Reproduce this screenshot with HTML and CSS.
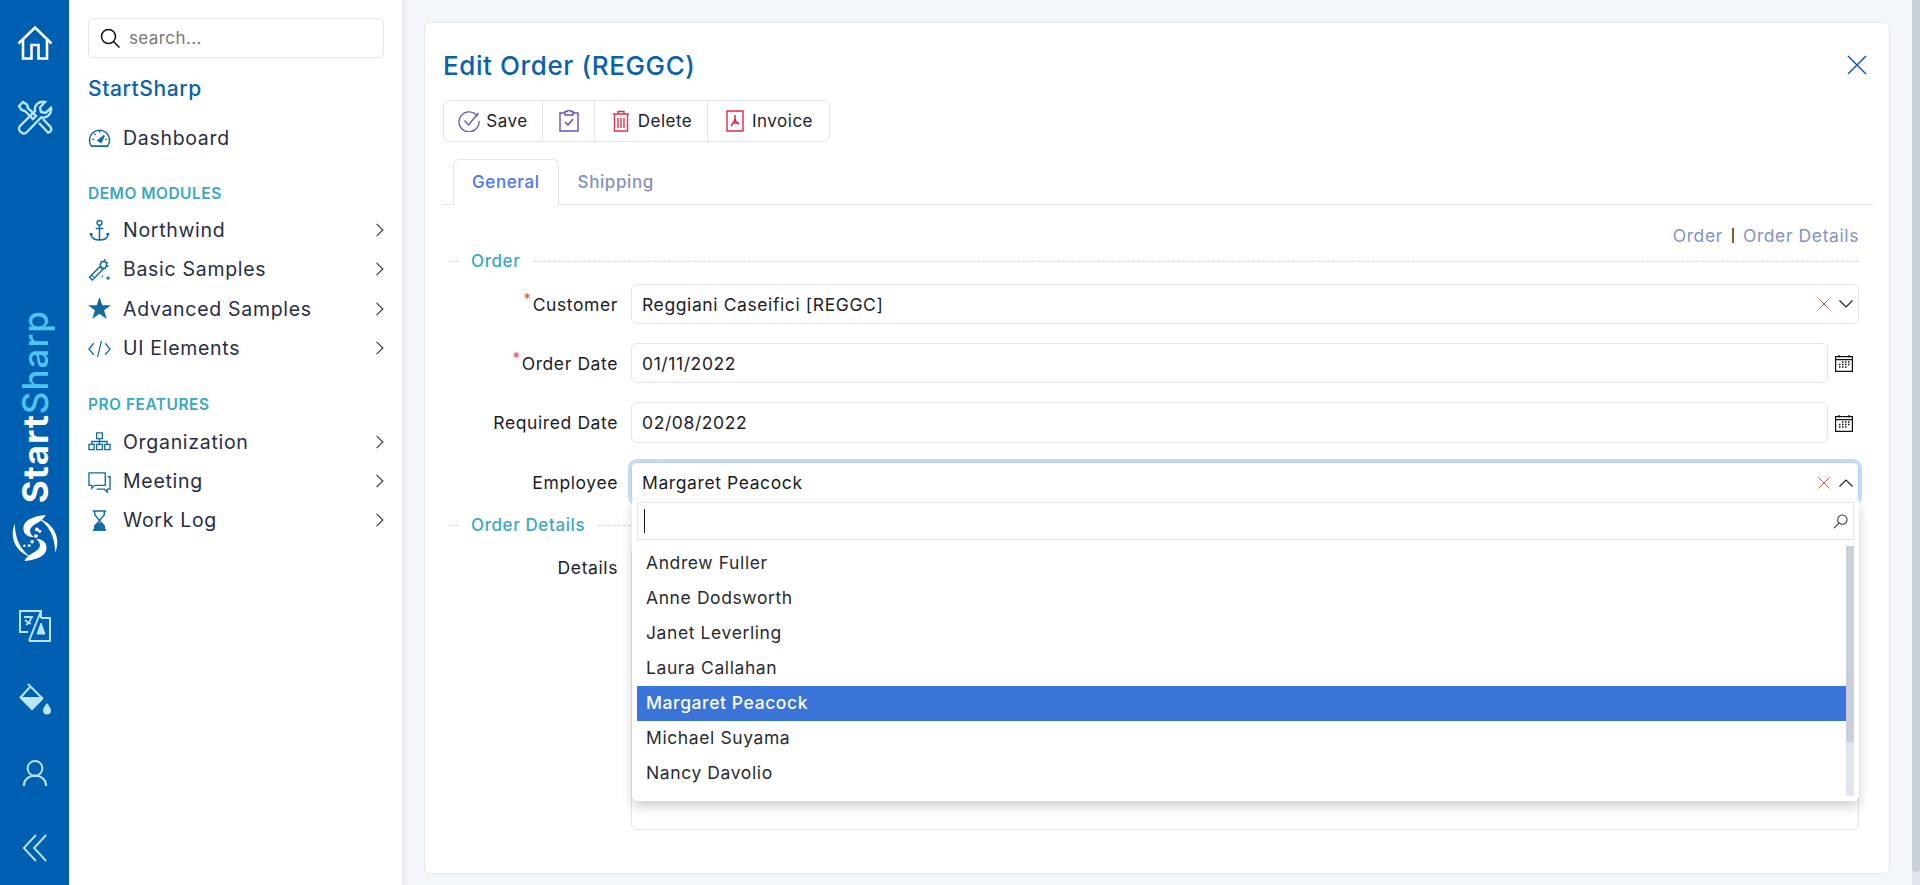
FILE: index.html
```html
<!DOCTYPE html>
<html lang="en">
<head>
  <meta charset="UTF-8">
  <title>Edit Order (REGGC)</title>
  <link rel="stylesheet" href="styles.css">
</head>
<body>
  <aside class="rail">
    <svg class="rail-icon rail-home" viewBox="0 0 36 36" fill="none" stroke="currentColor" stroke-width="2.6"><path d="M1.500 18.500 18 2.500l16.500 16"/><path d="M6 15v18.500h8.500V20h7v13.500H30V15"/></svg>
    <svg class="rail-icon rail-tools" viewBox="0 0 36 36" fill="none" stroke="currentColor" stroke-width="2.400"><path d="M2 6l4-4 4 2.500 1 3.500 8 8-3 3-8-8-3.500-1z"/><path d="M34 8l-5.500 5-4.500-1-1-4.500 5-5.500c-6-1.500-11 3-10 9L3 26c-3.500 3.500 3 10 6.500 6.500L24 17.500c6 1 11-3.500 10-9.500z"/><path d="M22 23l9 9.500c3.500-.5 4-3.500 2.500-5.500L26 19"/></svg>
    <div class="rail-brand">
      <span class="rail-brand-text"><b>Start</b><i>Sharp</i></span>
      <svg class="rail-logo" viewBox="0 0 48 48" fill="#fff">
        <path d="M35 0C24 1 11 5 12 15c.5 6 7 8.500 11 8-4-3-6-7-2-11 4-4 11-5 14-12z"/>
        <path d="M35 0C24 1 11 5 12 15c.5 6 7 8.500 11 8-4-3-6-7-2-11 4-4 11-5 14-12z" transform="rotate(180 24 24)"/>
        <path d="M3 9C-3 22 3 39 20 44 11 38 3 27 3 9z"/>
        <path d="M3 9C-3 22 3 39 20 44 11 38 3 27 3 9z" transform="rotate(180 24 24)"/>
        <g fill="#005fb0"><circle cx="26" cy="13" r="1.500"/><circle cx="22" cy="35" r="1.500"/></g>
        <circle cx="26" cy="15" r="2"/><circle cx="29" cy="17" r="1.600"/><circle cx="25" cy="22" r="2"/><circle cx="21" cy="28" r="1.800"/><circle cx="18" cy="32" r="1.500"/><circle cx="13" cy="32" r="1.300"/>
      </svg>
    </div>
    <svg class="rail-icon rail-translate" viewBox="0 0 32 32" fill="none" stroke="currentColor" stroke-width="2"><path d="M22 8V1H1v21h8"/><path d="M10 31h21V8h-9"/><path d="M22 1 10 31"/><path d="M5 7h9M12 7c0 4-2 6-5 8M6 10c2 2 3 3 6 4" stroke-width="1.800"/><path d="M22 13l-4 11h8z" fill="currentColor" stroke-width="1"/></svg>
    <svg class="rail-icon rail-bucket" viewBox="0 0 32 32" fill="none" stroke="currentColor" stroke-width="2"><path d="M9 1l15 15"/><path d="M11 4 1.500 14.500 13 26l10-10"/><path d="M3 15h19l-9 10.500z" fill="currentColor"/><path d="M28 20c-2 3-4 5-4 7.500a4 4 0 0 0 8 0c0-2.500-2-4.500-4-7.500z" fill="currentColor" stroke="none"/></svg>
    <svg class="rail-icon rail-user" viewBox="0 0 28 30" fill="none" stroke="currentColor" stroke-width="2.200"><circle cx="14" cy="10" r="8"/><path d="M2 29c0-7 5-11 12-11s12 4 12 11"/></svg>
    <svg class="rail-icon rail-collapse" viewBox="0 0 28 30" fill="none" stroke="currentColor" stroke-width="2"><path d="M15 1 2 15l13 14M26 1 13 15l13 14"/></svg>
  </aside>

  <nav class="sidebar">
    <div class="side-search">
      <svg class="side-search-icon" viewBox="0 0 20 20" fill="none" stroke="#111" stroke-width="1.500"><circle cx="8.500" cy="8.500" r="7"/><path d="m13.500 13.500 6 6"/></svg>
      <span>search...</span>
    </div>
    <div class="side-brand">StartSharp</div>
    <a class="side-item">
      <svg class="side-icon" viewBox="0 0 24 24" fill="none" stroke="currentColor" stroke-width="1.600"><path d="M3.500 21a10.500 10.500 0 1 1 17 0z"/><path d="m10.500 15 6.500-5-3.500 7z" fill="currentColor"/><path d="M4.500 14h2M6.500 8 8 9.500M12 5v2M20 14h-2" stroke-width="1.300"/></svg>
      <span>Dashboard</span>
    </a>
    <div class="side-head side-head-first">DEMO MODULES</div>
    <a class="side-item">
      <svg class="side-icon" viewBox="0 0 24 24" fill="none" stroke="currentColor" stroke-width="1.600"><circle cx="12" cy="4" r="2.500"/><path d="M12 6.500V22M8 10h8M2 15l1.500 2.500c1 3 5 4.500 8.500 4.500s7.500-1.500 8.500-4.500L22 15M2 15l3 1M22 15l-3 1"/></svg>
      <span>Northwind</span><i class="chevron"></i>
    </a>
    <a class="side-item">
      <svg class="side-icon" viewBox="0 0 24 24" fill="none" stroke="currentColor" stroke-width="1.500"><path d="m1.500 20 11-11 3 3-11 11z"/><path d="m12.500 6.500 1-1 .500-2 2 .500 1.500-2 .500 2.500 2 .500-1 2 1.500 1.500-2 .500-.500 2-2-.500-1 1z"/><path d="m4 18 2 2" stroke-width="1.200"/><path d="M21 19v4M19 21h4M15 18.500v1.500" stroke-width="1.300"/></svg>
      <span>Basic Samples</span><i class="chevron"></i>
    </a>
    <a class="side-item">
      <svg class="side-icon" viewBox="0 0 24 24" fill="#136ba0"><path d="m12 0 3 8.500h9l-7.200 5.400 2.700 9.100-7.500-5.400L4.500 23l2.700-9.100L0 8.500h9z"/></svg>
      <span>Advanced Samples</span><i class="chevron"></i>
    </a>
    <a class="side-item">
      <svg class="side-icon" viewBox="0 0 24 24" fill="none" stroke="currentColor" stroke-width="1.300"><path d="M6 6.500 1 12.500l5 6M18 6.500l5 6-5 6M14 4l-4 17"/></svg>
      <span>UI Elements</span><i class="chevron"></i>
    </a>
    <div class="side-head">PRO FEATURES</div>
    <a class="side-item">
      <svg class="side-icon" viewBox="0 0 24 24" fill="none" stroke="currentColor" stroke-width="1.400"><path d="M9 3h6v6H9zM1 15h5.500v5.500H1zM9 15h6v5.500H9zM17.500 15H23v5.500h-5.500zM12 9v6M4 15v-3h16v3"/></svg>
      <span>Organization</span><i class="chevron"></i>
    </a>
    <a class="side-item">
      <svg class="side-icon" viewBox="0 0 24 24" fill="none" stroke="currentColor" stroke-width="1.400"><path d="M1 3h17v13H7l-3 3v-3H1z"/><path d="M20.500 7H23v13h-3v3l-3-3H9"/></svg>
      <span>Meeting</span><i class="chevron"></i>
    </a>
    <a class="side-item">
      <svg class="side-icon" viewBox="0 0 24 24" fill="none" stroke="currentColor" stroke-width="1.500"><path d="M5 2h14M5 22h14M7 2v4l5 6 5-6V2M7 22v-4l5-6 5 6v4"/><path d="M7 22v-2a5 5 0 0 1 10 0v2z" fill="currentColor"/></svg>
      <span>Work Log</span><i class="chevron"></i>
    </a>
  </nav>

  <main class="main">
    <section class="card">
      <div class="card-title">
        <h1>Edit Order (REGGC)</h1>
        <svg class="card-close" viewBox="0 0 20 20" fill="none" stroke="#1c4fd0" stroke-width="1.500"><path d="m1 1 18 18M19 1 1 19"/></svg>
      </div>

      <div class="toolbar">
        <button class="tool tool-save">
          <svg viewBox="0 0 22 22" fill="none" stroke-width="1.300"><path d="M19.500 6.500A10 10 0 1 0 21 11" stroke="#6a4fc0"/><path d="m6.500 10.500 4 4.500 10-12" stroke="#6a4fc0"/></svg>
          <span>Save</span>
        </button>
        <button class="tool tool-apply">
          <svg viewBox="0 0 20 22" fill="none" stroke="#6a4fc0" stroke-width="1.400"><path d="M6 3H1v18h18V3h-5"/><path d="M6 1.500h2.500a1.500 1.500 0 0 1 3 0H14V5H6z"/><path d="m6 12 3 3 5-6" stroke="#5a48b0"/></svg>
        </button>
        <button class="tool tool-delete">
          <svg viewBox="0 0 18 22" fill="none" stroke="#e0344c" stroke-width="1.400"><path d="M1 4h16M6 4V1.500h6V4M2.500 4v17h13V4M6 8v10M9 8v10M12 8v10"/></svg>
          <span>Delete</span>
        </button>
        <button class="tool tool-invoice">
          <svg viewBox="0 0 18 22" fill="none" stroke="#d92c4c" stroke-width="1.400"><path d="M1 1h16v20H1z"/><path d="M9 5v3c0 3-2 5-4 8M9 8c0 3 2 5 4 6M6 13h7" stroke-width="1.500"/></svg>
          <span>Invoice</span>
        </button>
      </div>

      <div class="tabs">
        <span class="tab tab-active">General</span>
        <span class="tab">Shipping</span>
      </div>

      <div class="cat-links"><a>Order</a><i></i><a>Order Details</a></div>

      <div class="category cat-order"><span>Order</span></div>

      <div class="row">
        <label class="row-label"><sup>*</sup>Customer</label>
        <div class="select">
          <span>Reggiani Caseifici [REGGC]</span>
          <svg class="select-clear" viewBox="0 0 12 12" fill="none" stroke="#cc5a4c" stroke-width="1"><path d="m.5.500 11 11M11.500.500l-11 11"/></svg>
          <svg class="select-arrow" viewBox="0 0 14 8" fill="none" stroke="#222" stroke-width="1.200"><path d="m.5.500 6.500 6.500 6.500-6.500"/></svg>
        </div>
      </div>

      <div class="row">
        <label class="row-label"><sup>*</sup>Order Date</label>
        <div class="date-input">01/11/2022</div>
        <svg class="date-icon" viewBox="0 0 18 18"><use href="#calendar"/></svg>
      </div>

      <div class="row row-tall">
        <label class="row-label">Required Date</label>
        <div class="date-input">02/08/2022</div>
        <svg class="date-icon" viewBox="0 0 18 18">
          <g id="calendar" fill="none" stroke="#111" stroke-width="1.200">
            <path d="M.6 2.600h16.800v14.800H.6zM.6 5.600h16.800M4 1v2.500M14 1v2.500"/>
            <path d="M7 8h1.500M10 8h1.500M13 8h1.500M4 10.500h1.500M7 10.500h1.500M10 10.500h1.500M13 10.500h1.500M4 13h1.500M7 13h1.500M10 13h1.500" stroke-width="1.300"/>
          </g>
        </svg>
      </div>

      <div class="row row-tall">
        <label class="row-label">Employee</label>
        <div class="select select-open">
          <span>Margaret Peacock</span>
          <svg class="select-clear" viewBox="0 0 12 12" fill="none" stroke="#cc5a4c" stroke-width="1"><path d="m.5.500 11 11M11.500.500l-11 11"/></svg>
          <svg class="select-arrow" viewBox="0 0 14 8" fill="none" stroke="#222" stroke-width="1.200"><path d="m.5 7.500 6.500-6.500 6.500 6.500"/></svg>
          <div class="dropdown">
            <div class="dropdown-search">
              <i class="caret"></i>
              <svg viewBox="0 0 16 16" fill="none" stroke="#333" stroke-width="1.100"><circle cx="10" cy="6" r="5"/><path d="M6.500 9.500 1 15"/></svg>
            </div>
            <div class="dropdown-body">
              <ul class="dropdown-list">
                <li>Andrew Fuller</li>
                <li>Anne Dodsworth</li>
                <li>Janet Leverling</li>
                <li>Laura Callahan</li>
                <li class="selected">Margaret Peacock</li>
                <li>Michael Suyama</li>
                <li>Nancy Davolio</li>
              </ul>
              <div class="dropdown-scroll"><div class="dropdown-thumb"></div></div>
            </div>
          </div>
        </div>
      </div>

      <div class="category cat-details"><span>Order Details</span></div>

      <div class="row row-details">
        <label class="row-label">Details</label>
        <div class="details-box"></div>
      </div>
    </section>
  </main>

  <div class="page-scroll"><div class="page-thumb"></div></div>
</body>
</html>
```

FILE: styles.css
```css
* {
  box-sizing: border-box;
}
body {
  margin: 0;
  height: 100vh;
  overflow: hidden;
  display: flex;
  font-family: Inter, "Open Sans", sans-serif;
  color: #1c1c28;
  background-color: #f3f6fa;
}

/* left blue strip */
.rail {
  width: 69px;
  flex: none;
  background-color: #005fb0;
  color: #b9e6fb;
  display: flex;
  flex-direction: column;
  align-items: center;
  padding-top: 25px;
}
.rail-icon {
  flex: none;
}
.rail-home {
  width: 36px;
  height: 36px;
  margin-bottom: 39px;
  color: #fff;
}
.rail-tools {
  width: 36px;
  height: 36px;
}
.rail-translate {
  width: 32px;
  height: 32px;
  margin-bottom: 41px;
}
.rail-bucket {
  width: 32px;
  height: 32px;
  margin-bottom: 44px;
}
.rail-user {
  width: 26px;
  height: 28px;
  margin-bottom: 47px;
}
.rail-collapse {
  width: 26px;
  height: 28px;
  margin-bottom: 23px;
}
.rail-brand {
  margin-top: auto;
  margin-bottom: 49px;
  display: flex;
  flex-direction: column;
  align-items: center;
  gap: 12px;
}
.rail-brand-text {
  writing-mode: vertical-rl;
  transform: rotate(180deg);
  font-size: 35px;
  line-height: 38px;
  letter-spacing: 1px;
  color: #fff;
}
.rail-brand-text b {
  font-weight: 700;
}
.rail-brand-text i {
  font-style: normal;
  font-weight: 500;
  color: #4cc6ee;
}
.rail-logo {
  width: 46px;
  height: 46px;
}

/* navigation */
.sidebar {
  width: 333px;
  flex: none;
  background-color: #fff;
  padding: 18px 18px 0 19px;
  box-shadow: 2px 0 6px rgba(40, 60, 90, 0.08);
  position: relative;
  z-index: 2;
}
.side-search {
  height: 40px;
  border: 1px solid #e3e5e9;
  border-radius: 5px;
  display: flex;
  align-items: center;
  padding-left: 11px;
  gap: 9px;
  font-size: 17px;
  letter-spacing: 0.4px;
  color: #777;
}
.side-search-icon {
  width: 20px;
  height: 20px;
}
.side-brand {
  margin-top: 18px;
  height: 26px;
  line-height: 26px;
  font-size: 21px;
  letter-spacing: 0.6px;
  font-weight: 500;
  color: #0a62ae;
}
.side-item {
  height: 39.4px;
  display: flex;
  align-items: center;
  font-size: 19.5px;
  letter-spacing: 0.7px;
  color: #2a2d44;
}
.side-brand + .side-item {
  margin-top: 16px;
}
.side-item span {
  flex: 1;
  margin-left: 12px;
}
.side-icon {
  width: 23px;
  height: 23px;
  flex: none;
  color: #136ba0;
}
.side-head {
  margin-top: 27px;
  margin-bottom: 7px;
  height: 20px;
  line-height: 20px;
  font-size: 15.5px;
  letter-spacing: 0.5px;
  font-weight: 600;
  color: #3ba8c0;
}
.side-head-first {
  margin-bottom: 6px;
}
.chevron {
  width: 8px;
  height: 8px;
  flex: none;
  margin-right: 3px;
  border-top: 1.2px solid #333;
  border-right: 1.2px solid #333;
  transform: rotate(45deg) scale(1.15);
}

/* main column */
.main {
  flex: 1;
  padding: 22px 22px 11px 22px;
  min-width: 0;
}
.card {
  height: 100%;
  background-color: #fff;
  border: 1px solid #e6e8ec;
  border-radius: 6px;
  padding: 0 30px 0 18px;
}
.card-title {
  display: flex;
  justify-content: space-between;
  align-items: center;
  margin-top: 23px;
  height: 38px;
}
.card-title h1 {
  margin: 0;
  font-size: 26px;
  letter-spacing: 0.6px;
  font-weight: 500;
  color: #0a62ae;
}
.card-close {
  width: 20px;
  height: 20px;
  margin-right: -8px;
}

.toolbar {
  display: inline-flex;
  vertical-align: top;
  margin-top: 16px;
  height: 42px;
  border: 1px solid #e3e5e9;
  border-radius: 6px;
}
.tool {
  display: flex;
  align-items: center;
  justify-content: center;
  background: none;
  border: none;
  border-right: 1px solid #e3e5e9;
  font: inherit;
  font-size: 17px;
  letter-spacing: 0.5px;
  color: #1c1c28;
  padding: 0;
  gap: 6px;
}
.tool:last-child {
  border-right: none;
}
.tool svg {
  height: 22px;
  width: 22px;
}
.tool-save {
  width: 99px;
}
.tool-apply {
  width: 52px;
}
.tool-delete {
  width: 113px;
}
.tool-invoice {
  width: 121px;
}

.tabs {
  display: flex;
  height: 46px;
  margin-top: 17px;
  margin-right: -14px;
  padding-left: 10px;
  border-bottom: 1px solid #e3e5e9;
  font-size: 17px;
  letter-spacing: 0.6px;
}
.tab {
  height: 46px;
  line-height: 45px;
  padding: 0 18px;
  color: #8591b8;
  font-weight: 500;
  border: 1px solid transparent;
  border-bottom: none;
}
.tab-active {
  color: #4f74f0;
  background-color: #fff;
  border-color: #e3e5e9;
  border-radius: 6px 6px 0 0;
}

.cat-links {
  display: flex;
  justify-content: flex-end;
  align-items: center;
  height: 22px;
  margin-top: 19px;
  gap: 9px;
  font-size: 17.5px;
  letter-spacing: 0.6px;
  color: #8493c4;
}
.cat-links i {
  width: 2px;
  height: 15px;
  background-color: #8a5a20;
}

.category {
  position: relative;
  height: 22px;
  display: flex;
  align-items: center;
  font-size: 17px;
  letter-spacing: 0.6px;
  font-weight: 500;
  color: #3ea8c0;
  padding-left: 22px;
  margin-left: 6px;
}
.category::before {
  content: "";
  position: absolute;
  left: 0;
  top: 11px;
  width: 10px;
  border-top: 1px dashed #d8dadf;
}
.category::after {
  content: "";
  flex: 1;
  margin-left: 13px;
  border-top: 1px dashed #d8dadf;
}
.cat-order {
  margin-top: 4px;
  margin-bottom: 12px;
}
.cat-details {
  margin-top: -8px;
  margin-bottom: 10px;
}

.row {
  display: flex;
  align-items: center;
  height: 40px;
  margin-bottom: 19px;
}
.row-tall {
  height: 41px;
}
.row-label {
  width: 175px;
  flex: none;
  margin-right: 13px;
  text-align: right;
  font-size: 17.5px;
  letter-spacing: 0.6px;
  color: #1c1c28;
}
.row-label sup {
  color: #e0534c;
  font-size: 15px;
  line-height: 0;
  margin-right: 1px;
}
.select, .date-input {
  flex: 1;
  height: 100%;
  display: flex;
  align-items: center;
  padding-left: 10px;
  border: 1px solid #e3e5e9;
  border-radius: 6px;
  font-size: 17.5px;
  letter-spacing: 0.6px;
  color: #1c1c28;
  min-width: 0;
}
.select {
  position: relative;
  justify-content: space-between;
}
.select > span {
  flex: 1;
}
.select-clear {
  width: 12px;
  height: 12px;
  margin-right: 9px;
}
.select-arrow {
  width: 14px;
  height: 8px;
  margin-right: 5px;
}
.select-open {
  box-shadow: 0 0 0 3px #c6daf5;
  border-color: #b8cff0;
}
.date-icon {
  width: 18px;
  height: 18px;
  flex: none;
  margin-left: 7px;
  margin-right: 6px;
}

/* open employee list */
.dropdown {
  position: absolute;
  left: 0;
  right: -1px;
  top: 37px;
  height: 301px;
  padding: 2px 5px 5px;
  background-color: #fff;
  border-radius: 0 0 6px 6px;
  box-shadow: 0 6px 12px rgba(0, 0, 0, 0.18);
  z-index: 5;
}
.dropdown-search {
  height: 38px;
  border: 1px solid #e3e5e9;
  display: flex;
  align-items: center;
  justify-content: space-between;
  padding: 0 5px 0 6px;
}
.dropdown-search svg {
  width: 15px;
  height: 15px;
}
.caret {
  width: 1px;
  height: 24px;
  background-color: #111;
}
.dropdown-body {
  display: flex;
  height: 250px;
  margin-top: 6px;
}
.dropdown-list {
  flex: 1;
  list-style: none;
  margin: 0;
  padding: 0;
}
.dropdown-list li {
  height: 35px;
  line-height: 33px;
  padding-left: 9px;
  font-size: 17.5px;
  letter-spacing: 0.6px;
  color: #2a2a30;
}
.dropdown-list li.selected {
  background-color: #3a74d8;
  color: #fff;
  font-weight: 500;
}
.dropdown-scroll {
  width: 8px;
  flex: none;
  background-color: #e0e5ef;
}
.dropdown-thumb {
  height: 197px;
  background-color: #c8d0dc;
  border-radius: 0 0 4px 4px;
}

.row-details {
  height: 284px;
  align-items: flex-start;
  margin-bottom: 0;
}
.row-details .row-label {
  margin-top: 11px;
}
.details-box {
  flex: 1;
  height: 100%;
  border: 1px solid #e3e5e9;
  border-radius: 6px;
}

.page-scroll {
  width: 8px;
  flex: none;
  background-color: #e0e5ef;
}
.page-thumb {
  height: 872px;
  background-color: #c8d0dc;
  border-radius: 0 0 4px 4px;
}
```
